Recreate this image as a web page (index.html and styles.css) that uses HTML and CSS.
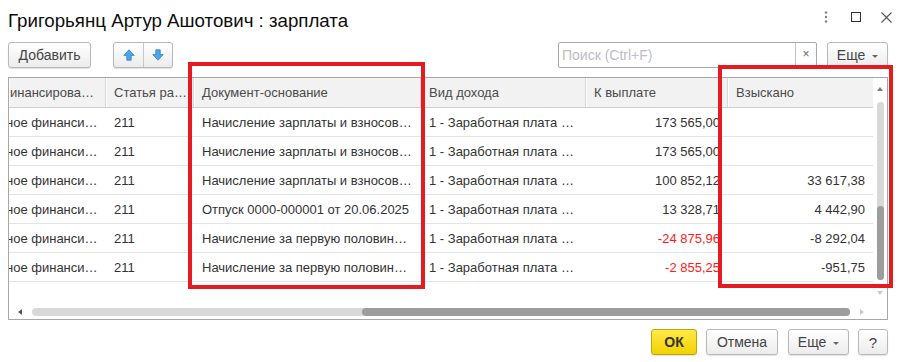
FILE: index.html
```html
<!DOCTYPE html>
<html lang="ru">
<head>
  <meta charset="UTF-8">
  <title>Григорьянц Артур Ашотович : зарплата</title>
  <link rel="stylesheet" href="styles.css">
</head>
<body>
  <div class="window">
    <div class="titlebar">
      <h1 class="title">Григорьянц Артур Ашотович : зарплата</h1>
      <div class="win-icons">
        <span class="win-icon">
          <svg width="4" height="12" viewBox="0 0 4 12"><circle cx="2" cy="1.5" r="1.2" fill="#808080"/><circle cx="2" cy="6" r="1.2" fill="#808080"/><circle cx="2" cy="10.5" r="1.2" fill="#808080"/></svg>
        </span>
        <span class="win-icon">
          <svg width="10" height="10" viewBox="0 0 10 10"><rect x="0.5" y="0.5" width="9" height="9" fill="none" stroke="#333" stroke-width="1"/></svg>
        </span>
        <span class="win-icon">
          <svg width="11" height="11" viewBox="0 0 11 11"><path d="M0.5 0.5 L10.5 10.5 M10.5 0.5 L0.5 10.5" stroke="#555" stroke-width="1.1"/></svg>
        </span>
      </div>
    </div>

    <div class="toolbar">
      <button class="btn btn-add">Добавить</button>
      <div class="btn-group">
        <button class="btn btn-icon">
          <svg width="12" height="12" viewBox="0 0 12 12"><path d="M6 0.8 L11.2 6.4 H8.2 V11.2 H3.8 V6.4 H0.8 Z" fill="#4ea6ea" stroke="#2f7fc8" stroke-width="0.8" stroke-linejoin="round"/></svg>
        </button>
        <button class="btn btn-icon">
          <svg width="12" height="12" viewBox="0 0 12 12"><path d="M6 11.2 L11.2 5.6 H8.2 V0.8 H3.8 V5.6 H0.8 Z" fill="#4ea6ea" stroke="#2f7fc8" stroke-width="0.8" stroke-linejoin="round"/></svg>
        </button>
      </div>
      <div class="search">
        <span class="search-input">Поиск (Ctrl+F)</span>
        <span class="search-clear">×</span>
      </div>
      <button class="btn btn-more">Еще <span class="caret"></span></button>
    </div>

    <div class="table">
      <div class="table-body">
        <div class="cols">
          <div class="row head">
            <div class="cell clip">инансирова…</div>
            <div class="cell">Статья ра…</div>
            <div class="cell">Документ-основание</div>
            <div class="cell">Вид дохода</div>
            <div class="cell">К выплате</div>
            <div class="cell">Взыскано</div>
          </div>
          <div class="row">
            <div class="cell clip"><span class="cut">ное финанси…</span></div>
            <div class="cell">211</div>
            <div class="cell">Начисление зарплаты и взносов…</div>
            <div class="cell">1 - Заработная плата …</div>
            <div class="cell num">173 565,00</div>
            <div class="cell num"></div>
          </div>
          <div class="row">
            <div class="cell clip"><span class="cut">ное финанси…</span></div>
            <div class="cell">211</div>
            <div class="cell">Начисление зарплаты и взносов…</div>
            <div class="cell">1 - Заработная плата …</div>
            <div class="cell num">173 565,00</div>
            <div class="cell num"></div>
          </div>
          <div class="row">
            <div class="cell clip"><span class="cut">ное финанси…</span></div>
            <div class="cell">211</div>
            <div class="cell">Начисление зарплаты и взносов…</div>
            <div class="cell">1 - Заработная плата …</div>
            <div class="cell num">100 852,12</div>
            <div class="cell num">33 617,38</div>
          </div>
          <div class="row">
            <div class="cell clip"><span class="cut">ное финанси…</span></div>
            <div class="cell">211</div>
            <div class="cell">Отпуск 0000-000001 от 20.06.2025</div>
            <div class="cell">1 - Заработная плата …</div>
            <div class="cell num">13 328,71</div>
            <div class="cell num">4 442,90</div>
          </div>
          <div class="row">
            <div class="cell clip"><span class="cut">ное финанси…</span></div>
            <div class="cell">211</div>
            <div class="cell">Начисление за первую половин…</div>
            <div class="cell">1 - Заработная плата …</div>
            <div class="cell num neg">-24 875,96</div>
            <div class="cell num">-8 292,04</div>
          </div>
          <div class="row">
            <div class="cell clip"><span class="cut">ное финанси…</span></div>
            <div class="cell">211</div>
            <div class="cell">Начисление за первую половин…</div>
            <div class="cell">1 - Заработная плата …</div>
            <div class="cell num neg">-2 855,25</div>
            <div class="cell num">-951,75</div>
          </div>
        </div>
        <div class="vscroll">
          <span class="arrow-up"></span>
          <div class="vtrack"><div class="vthumb"></div></div>
          <span class="arrow-down"></span>
        </div>
      </div>
      <div class="hscroll">
        <span class="arrow-left"></span>
        <div class="htrack"><div class="hthumb"></div></div>
        <span class="arrow-right"></span>
      </div>
    </div>

    <div class="footer">
      <button class="btn btn-ok">ОК</button>
      <button class="btn btn-cancel">Отмена</button>
      <button class="btn btn-more2">Еще <span class="caret"></span></button>
      <button class="btn btn-help">?</button>
    </div>

    <div class="highlight hl-doc"></div>
    <div class="highlight hl-sum"></div>
  </div>
</body>
</html>
```

FILE: styles.css
```css
body {
  margin: 0;
  font-family: "Liberation Sans", Arial, sans-serif;
  color: #333;
  background: #fff;
}
.window {
  position: relative;
  width: 880px;
  height: 362px;
  padding: 0 14px 0 8px;
}
.titlebar {
  display: flex;
  justify-content: space-between;
  align-items: flex-start;
  padding-top: 10px;
  height: 22px;
}
.title {
  margin: 0;
  font-size: 18.7px;
  font-weight: normal;
  line-height: 22px;
  color: #0d0d0d;
}
.win-icons {
  display: flex;
  align-items: center;
  height: 22px;
  margin-top: -4px;
  margin-right: -13px;
}
.win-icon {
  width: 30px;
  display: flex;
  justify-content: center;
  align-items: center;
}

.btn {
  box-sizing: border-box;
  height: 26px;
  padding: 0;
  border: 1px solid #b8b8b8;
  border-radius: 3px;
  background: linear-gradient(#ffffff, #ececec);
  box-shadow: 0 1px 1px rgba(0,0,0,0.12);
  font-family: inherit;
  font-size: 14px;
  color: #444;
}
.caret {
  display: inline-block;
  width: 0;
  height: 0;
  margin-left: 3px;
  vertical-align: middle;
  border-left: 3px solid transparent;
  border-right: 3px solid transparent;
  border-top: 3px solid #666;
}

.toolbar {
  display: flex;
  align-items: center;
  margin-top: 10px;
  height: 26px;
}
.btn-add {
  width: 83px;
}
.btn-group {
  display: flex;
  margin-left: 22px;
  height: 26px;
  box-sizing: border-box;
  border: 1px solid #b8b8b8;
  border-radius: 3px;
  box-shadow: 0 1px 1px rgba(0,0,0,0.12);
  background: linear-gradient(#ffffff, #ececec);
}
.btn-icon {
  width: 29px;
  height: 24px;
  border: none;
  border-radius: 0;
  box-shadow: none;
  background: transparent;
  display: flex;
  align-items: center;
  justify-content: center;
}
.btn-icon + .btn-icon {
  border-left: 1px solid #c8c8c8;
}
.search {
  display: flex;
  margin-left: auto;
  width: 259px;
  height: 26px;
  box-sizing: border-box;
  border: 1px solid #a9a9a9;
  border-radius: 2px;
  background: #fff;
}
.search-input {
  flex: 1;
  padding-left: 3px;
  font-size: 14px;
  line-height: 24px;
  color: #c0bcc8;
}
.search-clear {
  width: 20px;
  border-left: 1px solid #c4c4c4;
  text-align: center;
  font-size: 12px;
  line-height: 23px;
  color: #666;
}
.btn-more {
  width: 61px;
  margin-left: 10px;
}

.table {
  margin-top: 9px;
  height: 243px;
  box-sizing: border-box;
  border: 1px solid #a8a8a8;
  display: flex;
  flex-direction: column;
}
.table-body {
  display: flex;
  height: 226px;
}
.cols {
  width: 864px;
  overflow: hidden;
}
.row {
  display: grid;
  grid-template-columns: 97px 88px 227px 165px 142px 145px;
  height: 28px;
  border-bottom: 1px solid #e4e4e4;
  font-size: 13px;
}
.row.head {
  height: 29px;
  background: #f2f2f2;
  border-bottom: 1px solid #cfcfcf;
  color: #4a4a4a;
}
.cell {
  padding: 0 6px 0 8px;
  line-height: 28px;
  white-space: nowrap;
  overflow: hidden;
}
.row:not(.head) .cell {
  line-height: 30px;
}
.head .cell {
  line-height: 29px;
  border-right: 1px solid #d8d8d8;
  box-shadow: inset 1px 0 0 #fff;
}
.head .cell:last-child {
  border-right: none;
}
.cell.clip {
  padding-left: 1px;
}
.cut {
  display: inline-block;
  margin-left: -4px;
}
.num {
  text-align: right;
  padding-right: 8px;
}
.neg {
  color: #ff1a1a;
}

.vscroll {
  width: 14px;
  display: flex;
  flex-direction: column;
  align-items: center;
}
.arrow-up {
  margin-top: 9px;
  width: 0;
  height: 0;
  border-left: 3px solid transparent;
  border-right: 3px solid transparent;
  border-bottom: 4px solid #7a7a7a;
}
.vtrack {
  margin-top: 11px;
  width: 7px;
  height: 178px;
  border-radius: 4px;
  background: #d8d8d8;
  display: flex;
  flex-direction: column;
  justify-content: flex-end;
}
.vthumb {
  height: 74px;
  border-radius: 4px;
  background: #9d9d9d;
}
.arrow-down {
  margin-top: 11px;
  width: 0;
  height: 0;
  border-left: 3px solid transparent;
  border-right: 3px solid transparent;
  border-top: 4px solid #c8c8c8;
}

.hscroll {
  display: flex;
  align-items: center;
  height: 15px;
  padding-left: 9px;
}
.arrow-left {
  width: 0;
  height: 0;
  border-top: 3px solid transparent;
  border-bottom: 3px solid transparent;
  border-right: 4px solid #555;
}
.htrack {
  margin-left: 10px;
  width: 818px;
  height: 8px;
  border-radius: 4px;
  background: #d8d8d8;
  display: flex;
  justify-content: flex-end;
}
.hthumb {
  width: 488px;
  border-radius: 4px;
  background: #9d9d9d;
}
.arrow-right {
  margin-left: 10px;
  width: 0;
  height: 0;
  border-top: 3px solid transparent;
  border-bottom: 3px solid transparent;
  border-left: 4px solid #c8c8c8;
}

.footer {
  display: flex;
  justify-content: flex-end;
  margin-top: 9px;
}
.btn-ok {
  width: 46px;
  border-color: #c5a600;
  background: linear-gradient(#ffe94a, #f2d200);
  font-weight: bold;
  color: #333;
}
.btn-cancel {
  width: 72px;
  margin-left: 9px;
}
.btn-more2 {
  width: 61px;
  margin-left: 10px;
}
.btn-help {
  width: 30px;
  margin-left: 9px;
  font-size: 15px;
}

.highlight {
  position: absolute;
  box-sizing: border-box;
  border: 4px solid #e41b20;
}
.hl-doc {
  left: 188px;
  top: 62px;
  width: 237px;
  height: 227px;
}
.hl-sum {
  left: 718px;
  top: 65px;
  width: 175px;
  height: 223px;
}
```
